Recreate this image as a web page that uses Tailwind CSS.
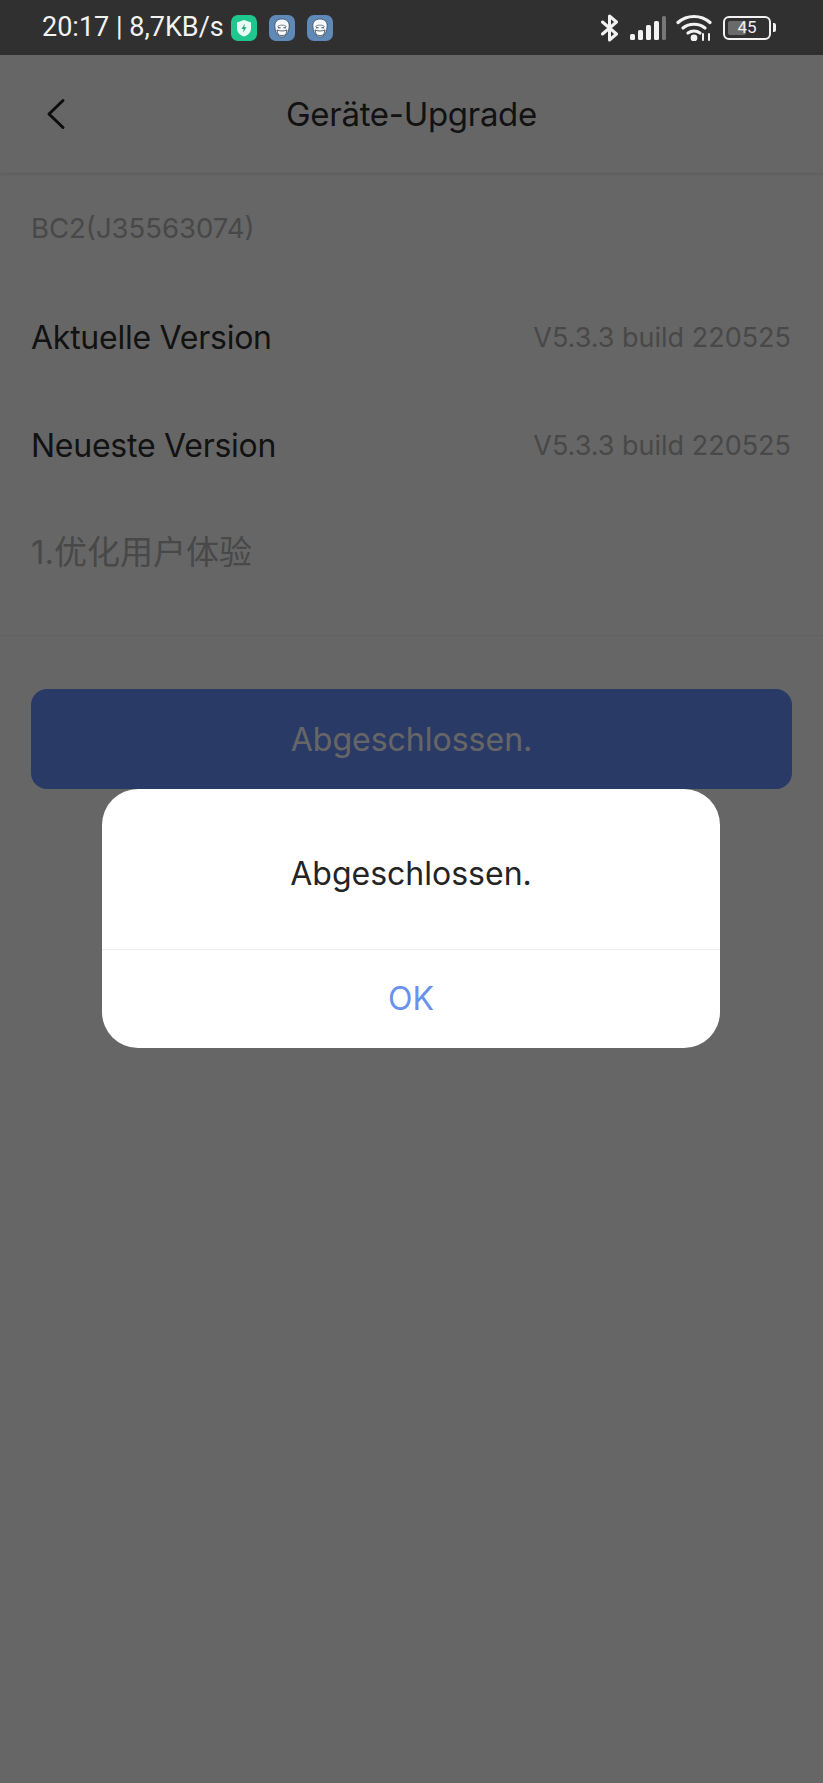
<!DOCTYPE html>
<html lang="de">
<head>
    <meta charset="UTF-8">
    <meta name="viewport" content="width=device-width, initial-scale=1.0">
    <title>Geräte-Upgrade</title>
    <script src="https://cdn.jsdelivr.net/npm/@tailwindcss/browser@4"></script>
</head>
<body class="relative h-[1783px] w-[823px] overflow-hidden bg-white font-['Inter','Noto_Sans_CJK_SC',sans-serif]">
    <!-- Status bar -->
    <div class="relative z-20 flex h-[55px] items-center justify-between bg-[#303030] pl-[42px] pr-[47px] text-white">
        <div class="flex items-center">
            <span class="font-['Roboto',sans-serif] text-[27px] leading-none text-[#f2f2f2]">20:17 | 8,7KB/s</span>
            <svg class="ml-[7px]" width="26" height="26" viewBox="0 0 26 26">
                <rect width="26" height="26" rx="7" fill="#1fc78f"/>
                <path d="M13 5l7 2.400v6c0 4-3 6.600-7 8-4-1.400-7-4-7-8v-6z" fill="#e9fbf5"/>
                <path d="M14 8.500l-3.500 5.500h2.300l-.8 3.800 3.500-5.500h-2.300z" fill="#1fa77c"/>
            </svg>
            <svg class="ml-[12px]" width="26" height="26" viewBox="0 0 26 26">
                <rect width="26" height="26" rx="7" fill="#5f8ab8"/>
                <path d="M6 12.500C5 7 8.500 4 13 4s8 3 7 8.500c-.5 5-3 9.500-7 9.500s-6.500-4.500-7-9.500z" fill="#f6f8fb" stroke="#2c3d52" stroke-width=".7"/>
                <path d="M8.500 12c1-2.500 8-2.500 9 0" stroke="#6f8296" stroke-width="1" fill="none"/>
                <path d="M9 12.800h2.500M14.500 12.800H17" stroke="#2c3d52" stroke-width="1" fill="none"/>
                <path d="M8 15c3 1.300 7 1.300 10 0l-1.200 4.500c-2 1.400-5.600 1.400-7.600 0z" fill="#ffffff" stroke="#2c3d52" stroke-width=".8"/>
            </svg>
            <svg class="ml-[12px]" width="26" height="26" viewBox="0 0 26 26">
                <rect width="26" height="26" rx="7" fill="#5f8ab8"/>
                <path d="M6 12.500C5 7 8.500 4 13 4s8 3 7 8.500c-.5 5-3 9.500-7 9.500s-6.500-4.500-7-9.500z" fill="#f6f8fb" stroke="#2c3d52" stroke-width=".7"/>
                <path d="M8.500 12c1-2.500 8-2.500 9 0" stroke="#6f8296" stroke-width="1" fill="none"/>
                <path d="M9 12.800h2.500M14.500 12.800H17" stroke="#2c3d52" stroke-width="1" fill="none"/>
                <path d="M8 15c3 1.300 7 1.300 10 0l-1.200 4.500c-2 1.400-5.600 1.400-7.600 0z" fill="#ffffff" stroke="#2c3d52" stroke-width=".8"/>
            </svg>
        </div>
        <div class="flex items-center">
            <!-- bluetooth -->
            <svg width="20" height="28" viewBox="0 0 20 28" fill="none" stroke="#f2f2f2" stroke-width="3" stroke-linejoin="round" stroke-linecap="round">
                <path d="M2.500 8l14 12-7 6V2l7 6-14 12"/>
            </svg>
            <!-- signal -->
            <svg class="ml-[10px]" width="36" height="24" viewBox="0 0 36 24">
                <rect x="0" y="18" width="5" height="6" rx="1.500" fill="#f2f2f2"/>
                <rect x="8" y="14" width="5" height="10" rx="1.500" fill="#f2f2f2"/>
                <rect x="16" y="9" width="5" height="15" rx="1.500" fill="#f2f2f2"/>
                <rect x="24" y="5" width="5" height="19" rx="1.500" fill="#f2f2f2"/>
                <rect x="32" y="0" width="4" height="24" rx="1.500" fill="#777777"/>
            </svg>
            <!-- wifi -->
            <svg class="ml-[10px]" width="36" height="27" viewBox="0 0 36 27" fill="none" stroke="#f2f2f2" stroke-width="3.200" stroke-linecap="round">
                <path d="M2 8.500c9-8 23-8 32 0"/>
                <path d="M7 14c6-5 16-5 22 0"/>
                <path d="M12 19c3.500-2.500 8.500-2.500 12 0"/>
                <circle cx="18" cy="24" r="1.800" fill="#f2f2f2"/>
                <path d="M27 20v6M33 20v6" stroke-width="2"/>
            </svg>
            <!-- battery -->
            <div class="ml-[11px] flex items-center">
                <div class="relative flex h-[24px] w-[48px] items-center justify-center overflow-hidden rounded-[6px] border-2 border-[#f2f2f2] p-[2px]">
                    <div class="absolute bottom-[3px] left-[3px] top-[3px] w-[18px] rounded-[2px] bg-[#6a6a6a]"></div>
                    <span class="relative font-['Roboto',sans-serif] text-[17px] leading-none text-[#eeeeee]">45</span>
                </div>
                <div class="ml-[2px] h-[9px] w-[3px] rounded-r-[2px] bg-[#f2f2f2]"></div>
            </div>
        </div>
    </div>

    <!-- Page under the scrim -->
    <div class="relative flex h-[118px] items-center justify-center pt-[1px] text-[33px] tracking-[-0.3px] text-[#2f2f2f] shadow-[0_1px_3px_rgba(0,0,0,0.12)]">
        <svg class="absolute left-[44px] top-[43px]" width="24" height="32" viewBox="0 0 24 32" fill="none" stroke="#222222" stroke-width="3" stroke-linecap="round" stroke-linejoin="round">
            <path d="M19 2.500L5 16l14 13.500"/>
        </svg>
        <span>Geräte-Upgrade</span>
    </div>

    <div class="border-b border-[#f4f4f4] pl-[31px] pr-[32px] pb-[30px]">
        <div class="flex h-[112px] items-center text-[27.500px] text-[#b4b4b4]">BC2(J35563074)</div>
        <div class="flex h-[106px] items-center justify-between text-[32px] text-[#2f2f2f] tracking-[-0.25px]">
            <span>Aktuelle Version</span>
            <span class="text-[27px] tracking-normal text-[#b4b4b4]">V5.3.3 build 220525</span>
        </div>
        <div class="flex h-[110px] items-center justify-between text-[32px] text-[#2f2f2f] tracking-[-0.25px]">
            <span>Neueste Version</span>
            <span class="text-[27px] tracking-normal text-[#b4b4b4]">V5.3.3 build 220525</span>
        </div>
        <div class="flex h-[104px] items-center text-[33px] text-[#b4b4b4]">1.优化用户体验</div>
    </div>

    <div class="px-[31px] pt-[53px]">
        <div class="flex h-[100px] items-center justify-center rounded-[16px] bg-[#6a91ff] pt-[2px] text-[32px] text-white">Abgeschlossen.</div>
    </div>

    <!-- Scrim -->
    <div class="absolute inset-x-0 bottom-0 top-[55px] z-10 bg-black/60"></div>

    <!-- Dialog -->
    <div class="absolute left-[102px] top-[789px] z-20 w-[618px] overflow-hidden rounded-[36px] bg-white">
        <div class="flex h-[160px] items-center justify-center pt-[9px] text-[32px] text-[#242424]">Abgeschlossen.</div>
        <div class="flex h-[99px] items-center justify-center border-t border-[#eeeeee] text-[32px] text-[#6a91ee]">OK</div>
    </div>
</body>
</html>
